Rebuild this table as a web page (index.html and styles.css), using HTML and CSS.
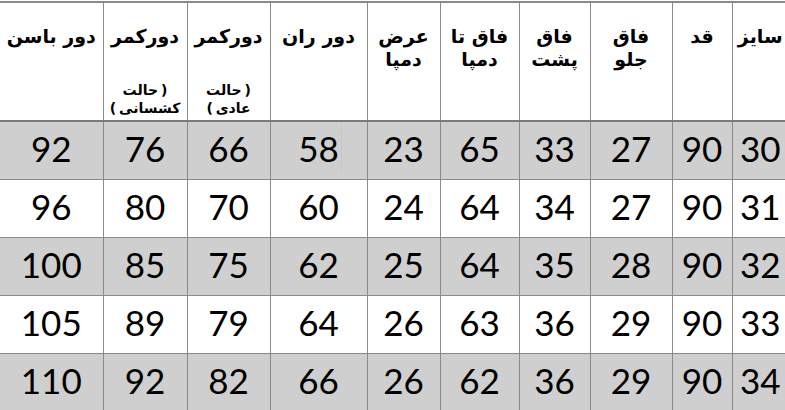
FILE: index.html
```html
<!DOCTYPE html>
<html lang="fa">
<head>
<meta charset="utf-8">
<link rel="stylesheet" href="styles.css">
</head>
<body>
<div class="frame">
<table class="sizes" dir="rtl">
<colgroup>
<col class="c-size"><col class="c-qad"><col class="c-jelo"><col class="c-posht"><col class="c-damp"><col class="c-arz"><col class="c-ran"><col class="c-kamar1"><col class="c-kamar2"><col class="c-basan">
</colgroup>
<thead>
<tr>
<th>سایز</th>
<th>قد</th>
<th>فاق<br>جلو</th>
<th>فاق<br>پشت</th>
<th>فاق تا<br>دمپا</th>
<th>عرض<br>دمپا</th>
<th>دور ران</th>
<th>دورکمر
  <div class="note">
    <div class="note-line"><span>حالت</span><span class="paren">)</span></div>
    <div class="note-line"><span class="paren">(</span><span>عادی</span></div>
  </div>
</th>
<th>دورکمر
  <div class="note">
    <div class="note-line"><span>حالت</span><span class="paren">)</span></div>
    <div class="note-line"><span class="paren">(</span><span>کشسانی</span></div>
  </div>
</th>
<th>دور باسن</th>
</tr>
</thead>
<tbody>
<tr class="shade"><td>30</td><td>90</td><td>27</td><td>33</td><td>65</td><td>23</td><td class="caret-cell">58</td><td>66</td><td>76</td><td>92</td></tr>
<tr><td>31</td><td>90</td><td>27</td><td>34</td><td>64</td><td>24</td><td>60</td><td>70</td><td>80</td><td>96</td></tr>
<tr class="shade"><td>32</td><td>90</td><td>28</td><td>35</td><td>64</td><td>25</td><td>62</td><td>75</td><td>85</td><td>100</td></tr>
<tr><td>33</td><td>90</td><td>29</td><td>36</td><td>63</td><td>26</td><td>64</td><td>79</td><td>89</td><td>105</td></tr>
<tr class="shade"><td>34</td><td>90</td><td>29</td><td>36</td><td>62</td><td>26</td><td>66</td><td>82</td><td>92</td><td>110</td></tr>
</tbody>
</table>
</div>
</body>
</html>
```
FILE: styles.css
```css
html, body {
  margin: 0;
  padding: 0;
  background: #ffffff;
}
.frame {
  width: 785px;
  height: 410px;
  overflow: hidden;
  padding-top: 1px;
  box-sizing: border-box;
}
.sizes {
  border-collapse: collapse;
  table-layout: fixed;
  width: 788px;
  color: #000;
}
.c-size { width: 56px; }
.c-qad { width: 60px; }
.c-jelo { width: 82px; }
.c-posht { width: 71px; }
.c-damp { width: 79px; }
.c-arz { width: 73px; }
.c-ran { width: 97px; }
.c-kamar1 { width: 83px; }
.c-kamar2 { width: 84px; }
.c-basan { width: 103px; }

.sizes th, .sizes td {
  border: 1px solid #8a8a8a;
  padding: 0;
  text-align: center;
}
.sizes tr > :first-child { border-right: none; }
.sizes tr > :last-child { border-left: none; }
.sizes thead th {
  border-top: 2px solid #8a8a8a;
  border-bottom: 2px solid #7a7a7a;
  height: 119px;
  vertical-align: top;
  padding-top: 22px;
  box-sizing: border-box;
  font-family: "DejaVu Sans", "Liberation Sans", sans-serif;
  font-weight: bold;
  font-size: 19px;
  line-height: 23px;
}
.note {
  margin-top: 33px;
  font-size: 14px;
  font-weight: bold;
  line-height: 18px;
}
.note-line {
  direction: ltr;
  display: flex;
  justify-content: center;
  gap: 3px;
}
.paren {
  direction: ltr;
}
.sizes td {
  height: 58px;
  font-family: Lato, "Open Sans", sans-serif;
  font-size: 35px;
  line-height: 40px;
  padding-bottom: 4px;
  box-sizing: border-box;
  vertical-align: middle;
}
.shade td { background-color: #cfcfcf; }
.sizes td.caret-cell {
  background-image: linear-gradient(#c4c4c4, #c4c4c4);
  background-repeat: no-repeat;
  background-size: 1px 46px;
  background-position: 70px 3px;
}
```
